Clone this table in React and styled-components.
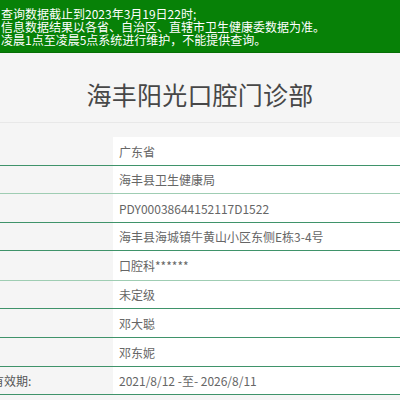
import React from "react";
import styled, { createGlobalStyle } from "styled-components";

const GlobalStyle = createGlobalStyle`
  html, body {
    margin: 0;
    padding: 0;
    background: #f5f5f5;
    overflow: hidden;
  }
  body {
    font-family: "Noto Sans CJK SC", "Noto Sans", "Liberation Sans", sans-serif;
  }
`;

const Page = styled.div`
  width: 400px;
  overflow: hidden;
  background: #f5f5f5;
`;

const Notice = styled.div`
  background: #078107;
  color: #fff;
  font-size: 12px;
  height: 53px;
  box-sizing: border-box;
  padding: 7px 0 0 1px;
  white-space: nowrap;
  border-bottom: 1px solid #066f06;
`;

const NoticeLine = styled.div`
  height: 13px;
  line-height: 13px;
`;

const Header = styled.div`
  height: 69px;
  display: flex;
  align-items: center;
  justify-content: center;
  border-bottom: 1px solid #e8e8e8;
`;

const Title = styled.h1`
  margin: 0;
  font-size: 25px;
  font-weight: 400;
  color: #474747;
  letter-spacing: 0.2px;
  padding-top: 12px;
`;

const Table = styled.div`
  margin-top: 14px;
  margin-left: -68px;
  width: 468px;
`;

const Row = styled.div`
  display: grid;
  grid-template-columns: 181px 1fr;
  height: ${(p) => p.$h}px;
  border-bottom: 1px solid ${(p) => (p.$soft ? "#9fcdb3" : "#3f936a")};
  box-sizing: border-box;
`;

const Label = styled.div`
  background: #f5f5f5;
  color: #555;
  font-size: 12px;
  display: flex;
  align-items: center;
  white-space: nowrap;
`;

const Value = styled.div`
  background: #fff;
  color: #666;
  font-size: 12px;
  display: flex;
  align-items: center;
  padding-left: 6px;
  white-space: nowrap;
`;

const rows = [
  { label: "所在省份:", value: "广东省", h: 29 },
  { label: "登记机关:", value: "海丰县卫生健康局", h: 28, soft: true },
  { label: "登记号:", value: "PDY00038644152117D1522", h: 29 },
  { label: "地址:", value: "海丰县海城镇牛黄山小区东侧E栋3-4号", h: 28 },
  { label: "诊疗科目:", value: "口腔科******", h: 30, soft: true },
  { label: "机构级别:", value: "未定级", h: 28 },
  { label: "法定代表人:", value: "邓大聪", h: 29 },
  { label: "主要负责人:", value: "邓东妮", h: 29 },
  { label: "执业许可证有效期:", value: "2021/8/12 -至- 2026/8/11", h: 28 },
];

export default function App() {
  return (
    <Page>
      <GlobalStyle />
      <Notice>
        <NoticeLine>查询数据截止到2023年3月19日22时;</NoticeLine>
        <NoticeLine>信息数据结果以各省、自治区、直辖市卫生健康委数据为准。</NoticeLine>
        <NoticeLine>凌晨1点至凌晨5点系统进行维护，不能提供查询。</NoticeLine>
      </Notice>
      <Header>
        <Title>海丰阳光口腔门诊部</Title>
      </Header>
      <Table>
        {rows.map((r) => (
          <Row key={r.label} $h={r.h} $soft={r.soft}>
            <Label>{r.label}</Label>
            <Value>{r.value}</Value>
          </Row>
        ))}
      </Table>
    </Page>
  );
}
